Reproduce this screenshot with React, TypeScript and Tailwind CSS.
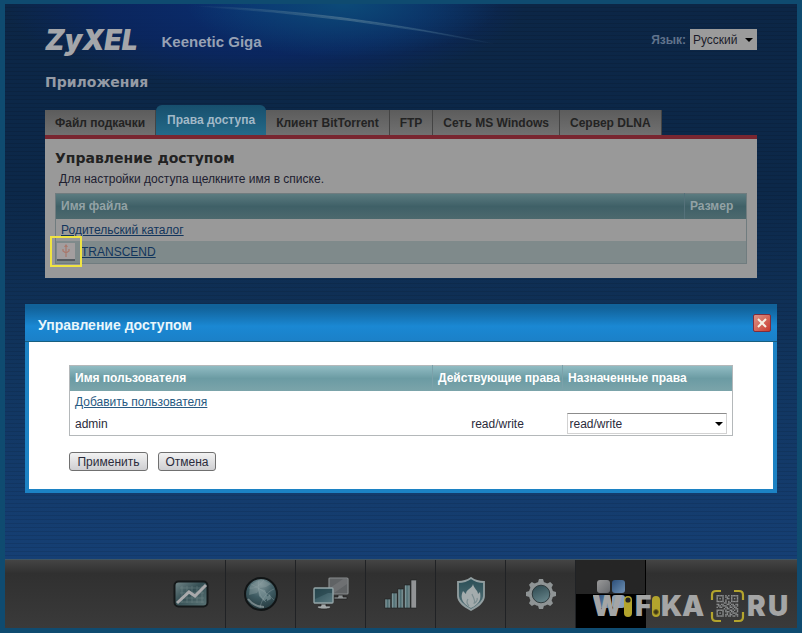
import type { ReactNode } from "react";
import clsx from "clsx";

const tabs = [
  { label: "Файл подкачки", href: "#swap" },
  { label: "Права доступа", href: "#access", active: true },
  { label: "Клиент BitTorrent", href: "#torrent" },
  { label: "FTP", href: "#ftp" },
  { label: "Сеть MS Windows", href: "#windows" },
  { label: "Сервер DLNA", href: "#dlna" },
];

const Caret = () => (
  <svg
    viewBox="0 0 8 4"
    className="pointer-events-none absolute right-1 top-1/2 h-1 w-2 -translate-y-1/2"
    aria-hidden="true"
  >
    <path d="M0 0h8L4 4z" fill="#000" />
  </svg>
);

const Glow = () => (
  <svg
    width="520"
    height="90"
    viewBox="0 0 520 90"
    className="pointer-events-none absolute left-0 top-0"
    aria-hidden="true"
  >
    <defs>
      <radialGradient id="glowBase" cx="0.5" cy="0" r="0.5" gradientTransform="matrix(1 0 0 1.9 0 0)">
        <stop offset="0" stopColor="#0a2f72" />
        <stop offset="0.6" stopColor="#0a2664" stopOpacity="0.8" />
        <stop offset="1" stopColor="#0a2664" stopOpacity="0" />
      </radialGradient>
      <radialGradient id="glowTop" cx="0.65" cy="0" r="0.3" gradientTransform="matrix(1 0 0 2 0 0)">
        <stop offset="0" stopColor="#0c4a78" />
        <stop offset="1" stopColor="#0c4a78" stopOpacity="0" />
      </radialGradient>
      <linearGradient id="swoosh">
        <stop offset="0" stopColor="#4a7290" stopOpacity="0" />
        <stop offset="0.5" stopColor="#4a7290" stopOpacity="0.7" />
        <stop offset="1" stopColor="#4a7290" stopOpacity="0" />
      </linearGradient>
    </defs>
    <rect width="520" height="90" fill="url(#glowBase)" />
    <rect width="520" height="90" fill="url(#glowTop)" />
    <path d="M190 2Q330 6 490 40Q350 12 190 2z" fill="url(#swoosh)" stroke="url(#swoosh)" />
  </svg>
);

const MonitorIcon = () => (
  <svg width="36" height="28" viewBox="0 0 36 28">
    <defs>
      <linearGradient id="monitor" x1="0" y1="0" x2="1" y2="1">
        <stop offset="0" stopColor="#75898b" />
        <stop offset="0.45" stopColor="#354f54" />
        <stop offset="1" stopColor="#5b7476" />
      </linearGradient>
    </defs>
    <rect x="1.5" y="1.5" width="33" height="25" rx="4" fill="url(#monitor)" stroke="#15191a" strokeWidth="2" />
    <path
      d="M9 6v17M14 6v17M19 6v17M24 6v17M29 6v17M7 8h24M7 13h24M7 18h24M7 22h24"
      stroke="#809496"
      strokeWidth="0.8"
      opacity="0.5"
    />
    <path d="M4 23l12-11 6 4L33 5" fill="none" stroke="#a9a9ab" strokeWidth="3" />
  </svg>
);

const GlobeIcon = () => (
  <svg width="36" height="36" viewBox="0 0 36 36">
    <defs>
      <radialGradient id="globe" cx="0.5" cy="0.2" r="0.8">
        <stop offset="0" stopColor="#7f9397" />
        <stop offset="0.5" stopColor="#3f5c63" />
        <stop offset="1" stopColor="#24383d" />
      </radialGradient>
    </defs>
    <circle cx="18" cy="18" r="16" fill="url(#globe)" stroke="#111516" strokeWidth="2" />
    <path d="M7 10c4-4 8-6 13-6l8 4-5 3-6 1-3 5-8 2z" fill="#8a9da0" opacity="0.45" />
    <path d="M15 12l7 2 3 8-4 3-5-5zM24 21l3-3 1 5-4 2z" fill="#859da0" opacity="0.6" />
    <path
      d="M6 12c7 1 11-3 15-8M16 4c-2 10 1 17 7 22M31 13c-8 3-13 12-14 19M8 8c7 4 17 9 23 16"
      fill="none"
      stroke="#91a3a6"
      strokeWidth="0.8"
      opacity="0.5"
    />
    <path d="M5 23c4 5 9 8 16 8" fill="none" stroke="#a7b1b2" strokeWidth="2" opacity="0.6" />
  </svg>
);

const NetworkIcon = () => (
  <svg width="38" height="36" viewBox="0 0 38 36">
    <defs>
      <linearGradient id="screen" x1="0" y1="0" x2="1" y2="1">
        <stop offset="0" stopColor="#294b54" />
        <stop offset="1" stopColor="#5a7980" />
      </linearGradient>
    </defs>
    <path d="M26 19h5v2h4v2H22v-2h4z" fill="#8d9192" stroke="#1d1d1d" strokeWidth="0.7" />
    <rect x="17" y="2" width="19" height="16" rx="1" fill="#606365" stroke="#888c8d" strokeWidth="1.2" />
    <path d="M18 12L31 3h4v5L22 17h-4z" fill="#7c7e80" opacity="0.5" />
    <path d="M9 28h5v2h4c2 2-1 3-6 3s-8-1-6-3h3z" fill="#a3a8a9" stroke="#1d1d1d" strokeWidth="0.7" />
    <rect x="2" y="12" width="19" height="15" rx="1" fill="url(#screen)" stroke="#93a4a6" strokeWidth="1.4" />
    <path d="M3 23l13-6h4v-4H3z" fill="#213e45" opacity="0.55" />
  </svg>
);

const SignalIcon = () => (
  <svg width="36" height="34" viewBox="0 0 36 34">
    <defs>
      <linearGradient id="bar">
        <stop offset="0" stopColor="#9bb0b3" />
        <stop offset="0.45" stopColor="#4d6c71" />
        <stop offset="1" stopColor="#8b9d9f" />
      </linearGradient>
    </defs>
    {[22, 16, 12, 8, 3].map((y, i) => (
      <rect
        key={y}
        x={2 + i * 6.5}
        y={y}
        width="5.6"
        height={31 - y}
        fill={i === 4 ? "#929496" : "url(#bar)"}
        stroke="#1b1e1f"
        strokeWidth="0.6"
      />
    ))}
  </svg>
);

const ShieldIcon = () => (
  <svg width="32" height="36" viewBox="0 0 32 36">
    <defs>
      <linearGradient id="shield" x1="0" y1="0" x2="0" y2="1">
        <stop offset="0" stopColor="#294d55" />
        <stop offset="1" stopColor="#59757b" />
      </linearGradient>
    </defs>
    <path
      d="M16 2c4 3 8 4 13 4v14c0 6-6 10-13 14C9 30 3 26 3 20V6c5 0 9-1 13-4z"
      fill="url(#shield)"
      stroke="#939fa1"
      strokeWidth="1.8"
    />
    <path
      d="M18 8c1 5 5 6 5 10l2-2c1 6 0 9-3 12-2 2-4 3-6 4-4-2-8-5-9-9-1-3 0-6 1-8l3 3c0-5 6-5 7-10z"
      fill="#a4acad"
    />
    <path d="M17 18c1 4 4 5 2 10M13 23c-2 3-1 5 1 7M22 22c1 2-1 4-2 5" fill="none" stroke="#7b8d90" strokeWidth="1.2" />
  </svg>
);

const GearIcon = () => (
  <svg width="34" height="34" viewBox="0 0 34 34">
    <defs>
      <linearGradient id="gear" x1="0" y1="0" x2="0.4" y2="1">
        <stop offset="0" stopColor="#243e45" />
        <stop offset="1" stopColor="#66848a" />
      </linearGradient>
    </defs>
    {[0, 45, 90, 135, 180, 225, 270, 315].map((angle) => (
      <path key={angle} d="M13.5 7l1.5-5h4l1.5 5z" fill="#8f9495" transform={`rotate(${angle} 17 17)`} />
    ))}
    <circle cx="17" cy="17" r="10.5" fill="url(#gear)" stroke="#8f9495" strokeWidth="3.4" />
    <circle cx="17" cy="17" r="8.8" fill="none" stroke="#202a2c" strokeWidth="0.8" />
  </svg>
);

const AppsIcon = () => (
  <svg width="32" height="32" viewBox="0 0 32 32">
    <defs>
      <linearGradient id="appGray" x1="0" y1="0" x2="1" y2="1">
        <stop offset="0" stopColor="#999" />
        <stop offset="1" stopColor="#66696d" />
      </linearGradient>
      <linearGradient id="appBlue" x1="0" y1="0" x2="1" y2="1">
        <stop offset="0" stopColor="#2c507c" />
        <stop offset="1" stopColor="#6f90b2" />
      </linearGradient>
    </defs>
    <rect x="2" y="2" width="13" height="13" rx="3" fill="url(#appGray)" />
    <rect x="17" y="2" width="13" height="13" rx="3" fill="url(#appBlue)" />
    <rect x="2" y="17" width="13" height="13" rx="3" fill="url(#appBlue)" />
    <rect x="17" y="17" width="13" height="13" rx="3" fill="#8ba1b9" />
  </svg>
);

const navItems: { label: string; icon: ReactNode; active?: boolean }[] = [
  { label: "Монитор", icon: <MonitorIcon /> },
  { label: "Интернет", icon: <GlobeIcon /> },
  { label: "Домашняя сеть", icon: <NetworkIcon /> },
  { label: "Сеть Wi-Fi", icon: <SignalIcon /> },
  { label: "Безопасность", icon: <ShieldIcon /> },
  { label: "Система", icon: <GearIcon /> },
  { label: "Приложения", icon: <AppsIcon />, active: true },
];

const qrRows = [
  "111110101011111",
  "100010110010001",
  "101010011010101",
  "100010100010001",
  "111110101011111",
  "000001101100000",
  "110110011011011",
  "011011100101101",
  "101100110110110",
  "000001011001011",
  "111110100110101",
  "100010111011001",
  "101010010101110",
  "100010110110011",
  "111110101101101",
];

const Watermark = () => (
  <svg
    width="200"
    height="36"
    viewBox="0 0 200 36"
    className="pointer-events-none absolute bottom-1 right-1"
  >
    <g fill="#a4a5a5" fontFamily="Inter, sans-serif" fontWeight="900" fontSize="28">
      <text x="-1" y="28">W</text>
      <text x="42" y="28">F</text>
      <text x="68" y="28">K</text>
      <text x="89" y="28">A</text>
      <text x="154" y="28">R</text>
      <text x="175" y="28">U</text>
    </g>
    <rect x="31" y="8" width="8" height="21" rx="4" fill="#b3a42d" />
    <circle cx="35" cy="12" r="2.6" fill="#222" />
    <rect x="59" y="8" width="8" height="21" rx="4" fill="#b3a42d" />
    <circle cx="63" cy="24" r="2.4" fill="#3d3716" stroke="#73681d" />
    <path
      d="M128 3h-5q-4 0-4 4v5M141 3h5q4 0 4 4v5M128 33h-5q-4 0-4-4v-5M141 33h5q4 0 4-4v-5"
      fill="none"
      stroke="#b3a42d"
      strokeWidth="2.2"
    />
    <g fill="#8b8d8e">
      {qrRows.map((row, y) =>
        [...row].map((cell, x) =>
          cell === "1" ? (
            <rect key={`${x}-${y}`} x={123.5 + x * 1.45} y={7 + y * 1.45} width="1.45" height="1.45" />
          ) : null
        )
      )}
    </g>
  </svg>
);

const DriveIcon = () => (
  <svg width="20" height="20" viewBox="0 0 20 20">
    <rect x="1" y="1" width="18" height="16" fill="#a39e9f" />
    <path d="M1 17h18v2H1z" fill="#555b60" />
    <path d="M10 15V4M7 7v2l3 2 3-2V7" fill="none" stroke="#a9786c" strokeWidth="1.2" />
    <path d="M8 5l2-3 2 3z" fill="#a9786c" />
  </svg>
);

const Header = () => (
  <header className="flex items-start justify-between pt-5">
    <div className="flex items-center gap-6">
      <span className="font-[Inter,sans-serif] text-[28px] font-black italic leading-8 text-[#a4a6aa]">
        ZyXEL
      </span>
      <span className="pt-1 text-[15px] font-bold text-[#97a1b4]">Keenetic Giga</span>
    </div>
    <div className="flex items-center gap-1 pt-[5px]">
      <label htmlFor="language" className="font-bold text-[#61738c]">
        Язык:
      </label>
      <div className="relative">
        <select
          id="language"
          className="block h-[21px] w-[67px] appearance-none bg-[#9b9b9b] pl-[3px] text-xs text-[#1c1c2a]"
        >
          <option>Русский</option>
        </select>
        <Caret />
      </div>
    </div>
  </header>
);

const FilePanel = () => (
  <section className="border-t-4 border-[#792630] bg-[#999] px-[10px] pb-[14px] pt-[10px] text-[#202030]">
    <h2 className="font-['DejaVu_Sans',sans-serif] text-sm font-bold leading-[18px] text-[#222]">
      Управление доступом
    </h2>
    <p className="mb-1 mt-[2px] pl-1 leading-5">Для настройки доступа щелкните имя в списке.</p>
    <table className="w-full border-collapse border border-[#707c7f] text-left">
      <thead>
        <tr className="h-[25px] bg-linear-to-b from-[#5b7b80] via-[#3f6067] to-[#4c696e] text-[#93a2a5]">
          <th className="pl-[5px]">Имя файла</th>
          <th className="w-[62px] border-l border-[#55717a] pl-[5px]">Размер</th>
        </tr>
      </thead>
      <tbody>
        <tr className="h-[22px]">
          <td className="pl-[5px]" colSpan={2}>
            <a href="#parent" className="text-[#12355c] underline">
              Родительский каталог
            </a>
          </td>
        </tr>
        <tr className="h-[22px] bg-[#7f8a8b]">
          <td colSpan={2}>
            <div className="relative flex h-[22px] items-center gap-[5px]">
              <DriveIcon />
              <span className="absolute -left-[6px] -top-[5px] h-[31px] w-8 border-2 border-[#f0e442]" />
              <a href="#transcend" className="text-[#12355c] underline">
                TRANSCEND
              </a>
            </div>
          </td>
        </tr>
      </tbody>
    </table>
  </section>
);

const AccessDialog = () => (
  <div className="absolute inset-x-0 top-[300px] px-5">
    <div
      role="dialog"
      aria-labelledby="dialog-title"
      className="border-4 border-t-0 border-[#1c82c4] bg-white text-[#2b2b3b]"
    >
      <div className="-mx-1 flex h-[38px] items-center justify-between border-b border-[#175f80] bg-linear-to-b from-[#11629a] from-10% via-[#1a88d3] via-60% to-[#1b80c8] pl-[13px] pr-[6px]">
        <h2 id="dialog-title" className="pt-1 text-sm font-bold text-[#e9f6fb]">
          Управление доступом
        </h2>
        <button
          aria-label="Закрыть"
          className="flex size-[18px] items-center justify-center rounded-xs border border-[#802c3c] bg-linear-to-br from-[#dc9287] to-[#c9392c]"
        >
          <svg width="12" height="12" viewBox="0 0 12 12">
            <path d="M2 2l8 8M10 2l-8 8" stroke="#f6f2e4" strokeWidth="2" />
          </svg>
        </button>
      </div>
      <form className="px-10 pb-[18px] pt-[23px]">
        <table className="w-full border-collapse border border-[#b4b8ba] text-left">
          <thead>
            <tr className="h-[25px] bg-linear-to-b from-[#91bcc3] via-[#6b9ba3] to-[#7ba4aa] text-white">
              <th className="pl-[5px]">Имя пользователя</th>
              <th className="w-[130px] whitespace-nowrap border-l border-[#7ba1aa] pl-[5px]">Действующие права</th>
              <th className="w-[170px] border-l border-[#7ba1aa] pl-[5px]">Назначенные права</th>
            </tr>
          </thead>
          <tbody>
            <tr className="h-[22px]">
              <td colSpan={3} className="pl-[5px]">
                <a href="#add" className="text-[#285a82] underline">
                  Добавить пользователя
                </a>
              </td>
            </tr>
            <tr className="h-[23px]">
              <td className="pl-[5px]">admin</td>
              <td className="text-center">read/write</td>
              <td className="pl-1 pr-[5px]">
                <div className="relative">
                  <select
                    aria-label="Назначенные права"
                    className="block h-[21px] w-full appearance-none border border-[#d2d2d2] border-t-[#8c8c8c] bg-white pl-[2px] text-xs text-[#2b2b3b]"
                  >
                    <option>read/write</option>
                  </select>
                  <Caret />
                </div>
              </td>
            </tr>
          </tbody>
        </table>
        <div className="mt-4 flex gap-[10px]">
          <button
            type="button"
            className="h-[19px] w-[79px] rounded-[3px] border border-[#707070] bg-linear-to-b from-[#f2f2f2] to-[#cfcfd2] leading-4"
          >
            Применить
          </button>
          <button
            type="button"
            className="h-[19px] w-[58px] rounded-[3px] border border-[#707070] bg-linear-to-b from-[#f2f2f2] to-[#cfcfd2] leading-4"
          >
            Отмена
          </button>
        </div>
      </form>
    </div>
  </div>
);

const BottomNav = () => (
  <nav className="relative mt-auto flex h-[69px] justify-center border-t border-[#3f5461] bg-linear-to-b from-[#444] via-[#303030] via-20% to-[#3a3a3a]">
    {navItems.map(({ label, icon, active }) => (
      <a
        key={label}
        href="#nav"
        aria-label={label}
        className={clsx(
          "flex w-[70px] items-center justify-center border-r",
          active
            ? "border-black bg-linear-to-b from-[#252525] from-50% to-black to-50%"
            : "border-[#202225]"
        )}
      >
        {icon}
      </a>
    ))}
    <Watermark />
  </nav>
);

export default function App() {
  return (
    <div className="relative flex min-h-screen flex-col border-x-[5px] border-b-[5px] border-t-4 border-[#0f4b70] bg-[repeating-linear-gradient(to_bottom,transparent_0px,transparent_3px,#00000018_3px,#00000018_4px),linear-gradient(to_bottom,#0c2646_0%,#0c2849_30%,#11355f_60%,#17437c_100%)] font-['Liberation_Sans',Arial,sans-serif] text-xs">
      <Glow />
      <div className="relative px-10">
        <Header />
        <h1 className="mb-[13px] mt-4 font-['DejaVu_Sans',sans-serif] text-sm font-bold leading-5 text-[#959ba5]">
          Приложения
        </h1>
        <nav className="flex items-end">
          {tabs.map(({ label, href, active }) => (
            <a
              key={label}
              href={href}
              className={clsx(
                "flex items-center justify-center font-bold",
                active
                  ? "h-[30px] rounded-t-md bg-linear-to-b from-[#174f6d] to-[#246a89] px-[11px] text-[#a2b9c8]"
                  : "h-[25px] border-r border-[#444] bg-linear-to-b from-[#5c5c5c] to-[#717171] px-[10px] text-[#232323]"
              )}
            >
              {label}
            </a>
          ))}
        </nav>
        <FilePanel />
      </div>
      <BottomNav />
      <AccessDialog />
    </div>
  );
}
